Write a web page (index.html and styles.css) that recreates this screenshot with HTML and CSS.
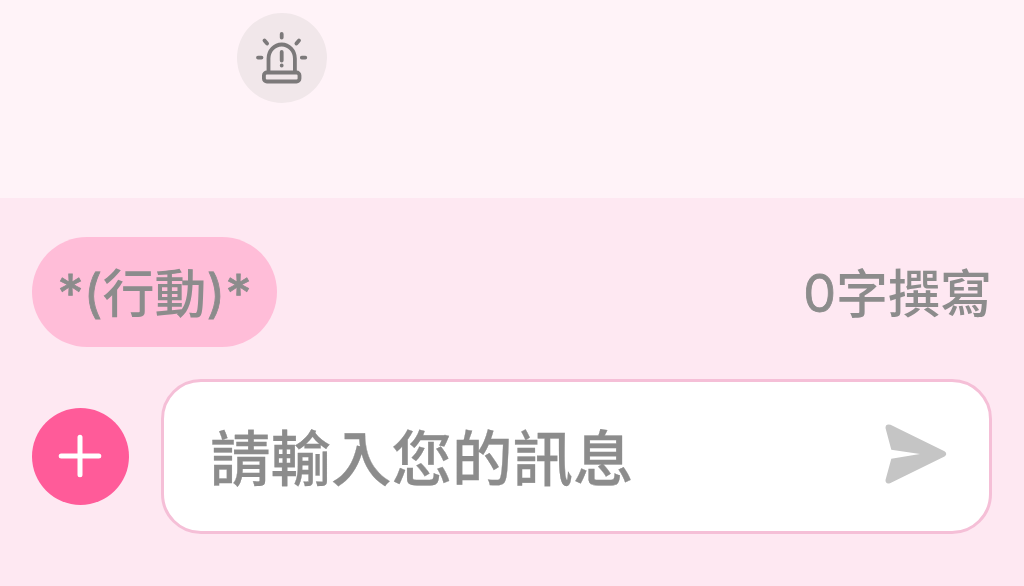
FILE: index.html
```
<!DOCTYPE html>
<html lang="zh-Hant">
	<head>
		<meta charset="UTF-8">
		<meta name="viewport" content="width=device-width, initial-scale=1.0" />
		<title>Chat</title>
		<link rel="stylesheet" href="styles.css">
	</head>
	<body>
		<div class="messages">
			<button class="report" aria-label="report">
				<svg width="52" height="52" viewBox="0 0 52 52">
					<path d="M12.500 40V26.500a13.200 14 0 0 1 26.400 0V40"/>
					<rect x="7.900" y="40.500" width="35.600" height="9" rx="3"/>
					<path d="M25.700 2v3.500M8.500 8.500l2.600 3M43 8.500l-2.600 3M2 25.600h3.500M45.800 25.600h3.500"/>
					<path d="M25.700 20v8.500M25.700 33.400v.2"/>
				</svg>
			</button>
		</div>
		<div class="composer">
			<div class="tools">
				<button class="action"><span class="thin">*(</span>行動<span class="thin">)*</span></button>
				<span class="count"><span class="thin">0</span>字撰寫</span>
			</div>
			<div class="row">
				<button class="add" aria-label="add">
					<svg width="44" height="44" viewBox="0 0 44 44"><path d="M22 3.200v37.600M3.200 22h37.600"/></svg>
				</button>
				<div class="field">
					<span class="placeholder">請輸入您的訊息</span>
					<svg class="send" width="62" height="60" viewBox="0 0 62 60">
						<path d="M5.500.8 59.500 27.200Q63 30 59.500 32.400L5 59.200Q.3 60.500.5 56L6.300 34.800 35 30 6.300 25.800.5 4Q.5-.5 5.500.8Z"/>
					</svg>
				</div>
			</div>
		</div>
	</body>
</html>
```
FILE: styles.css
```
*{box-sizing:border-box;}
body{margin:0;height:586px;display:flex;flex-direction:column;background:#fee8f2;font-family:Inter,"Noto Sans CJK TC",sans-serif;font-weight:500;color:#8c8c8c;overflow:hidden;}
button{border:0;margin:0;padding:0;font:inherit;color:inherit;}
.thin{font-weight:400;-webkit-text-stroke:.8px #8c8c8c;vertical-align:1px;line-height:1;}

.messages{height:198px;padding:13px 0 0 237px;background:#fff3f8;}
.report{display:flex;align-items:center;justify-content:center;width:90px;height:90px;border-radius:50%;background:#f1e7ea;}
.report svg{fill:none;stroke:#7c797a;stroke-width:3.800;stroke-linecap:round;stroke-linejoin:round;}

.composer{flex:1;padding:39px 32px 0;}
.tools{display:flex;align-items:center;justify-content:space-between;height:110px;font-size:52px;line-height:110px;white-space:nowrap;}
.action{width:245px;height:110px;padding-top:6px;border-radius:55px;background:#ffbdd8;line-height:104px;text-align:center;}
.count{padding-top:5px;}

.row{display:flex;align-items:center;margin-top:32px;}
.add{display:flex;align-items:center;justify-content:center;width:97px;height:97px;margin-bottom:1px;border-radius:50%;background:#ff5b99;}
.add svg{margin-right:1px;fill:none;stroke:#fff;stroke-width:5;stroke-linecap:round;}
.field{flex:1;display:flex;align-items:center;justify-content:space-between;height:155px;margin-left:32px;padding:0 42px 0 46px;border:3px solid #f5bfd7;border-radius:40px;background:#fff;}
.placeholder{padding-top:6px;font-size:60.500px;line-height:1;-webkit-text-stroke:.3px #8c8c8c;}
.send{margin-bottom:6px;fill:#c5c5c5;}
```
